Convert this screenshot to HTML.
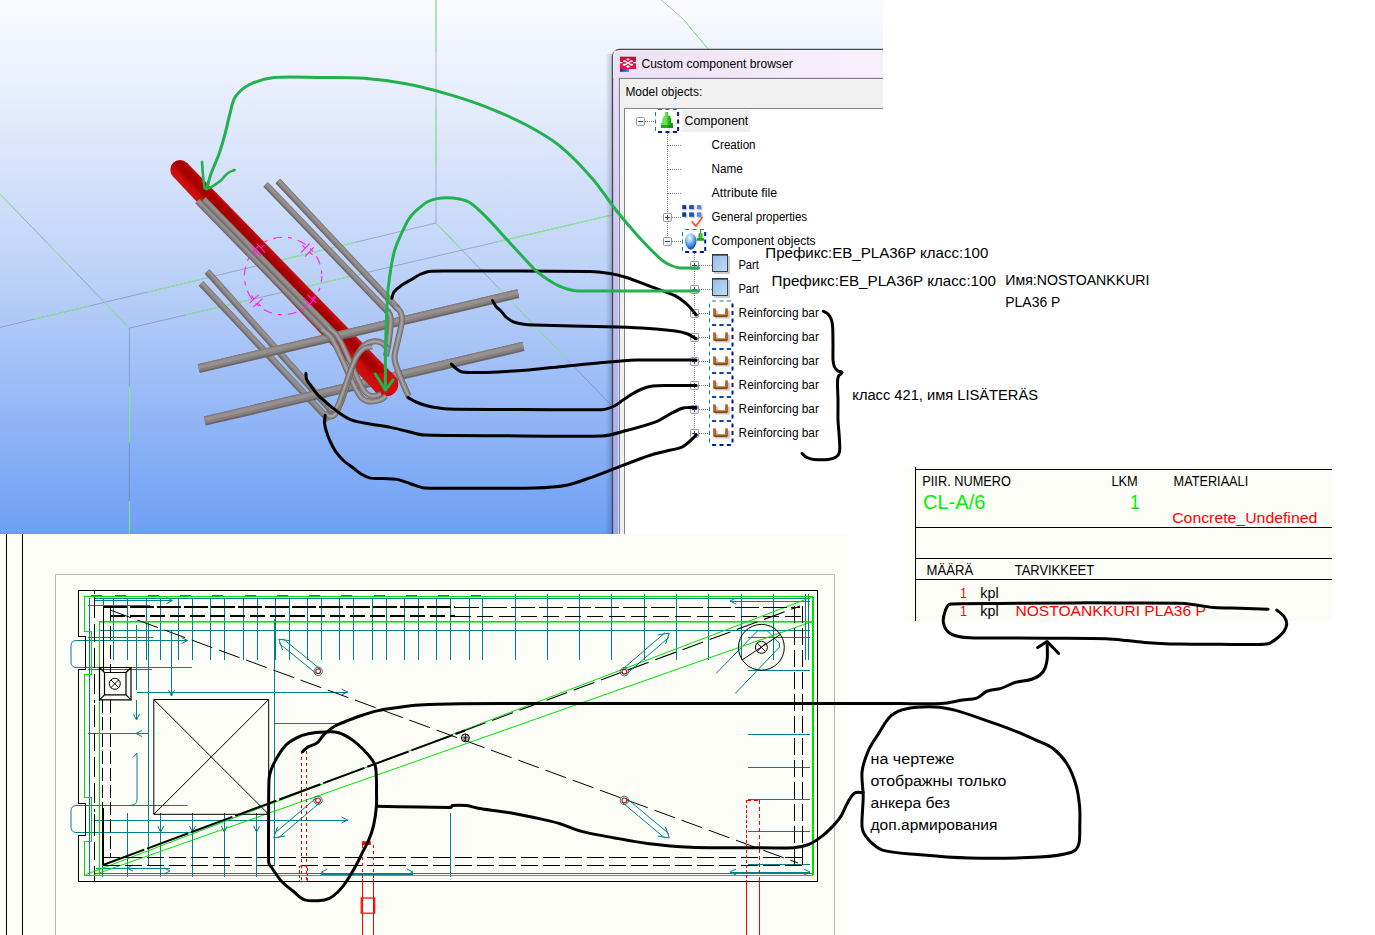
<!DOCTYPE html>
<html lang="ru"><head><meta charset="utf-8"><title>Custom component browser</title>
<style>html,body{margin:0;padding:0;background:#fff}body{width:1375px;height:935px;overflow:hidden;position:relative}svg{position:absolute;left:0;top:0;display:block}</style></head><body>
<svg width="1375" height="935" viewBox="0 0 1375 935">
<rect width="1375" height="935" fill="#ffffff"/>
<defs>
<linearGradient id="sky" x1="0" y1="0" x2="0" y2="1"><stop offset="0" stop-color="#fafbff"/><stop offset="0.25" stop-color="#dfe8fb"/><stop offset="0.5" stop-color="#bfd3f8"/><stop offset="0.75" stop-color="#97b9f6"/><stop offset="0.995" stop-color="#6fa0f5"/><stop offset="1" stop-color="#6498f0"/></linearGradient>
<linearGradient id="redg" gradientUnits="userSpaceOnUse" x1="275.2" y1="283.8" x2="290.400" y2="269.200"><stop offset="0" stop-color="#c81414"/><stop offset="0.3" stop-color="#cc0a0a"/><stop offset="0.55" stop-color="#a20000"/><stop offset="0.8" stop-color="#ac0000"/><stop offset="1" stop-color="#c41414"/></linearGradient>
<clipPath id="clip3d"><rect x="0" y="0" width="883" height="534"/></clipPath>
</defs>
<g clip-path="url(#clip3d)">
<rect x="0" y="0" width="883" height="534" fill="url(#sky)"/>
<line x1="436" y1="0" x2="436" y2="223" stroke="#5a6a94" stroke-opacity="0.42" stroke-width="1"/>
<line x1="436" y1="0" x2="436" y2="52" stroke="#80f080" stroke-width="1"/>
<line x1="436" y1="109" x2="436" y2="166" stroke="#80f080" stroke-width="1"/>
<line x1="0" y1="327.4" x2="436" y2="223" stroke="#5a6a94" stroke-opacity="0.42" stroke-width="1"/>
<line x1="33.8" y1="319.3" x2="91" y2="305.6" stroke="#80f080" stroke-width="1"/>
<line x1="146.9" y1="292.2" x2="205.2" y2="278.3" stroke="#80f080" stroke-width="1"/>
<line x1="279.9" y1="260.4" x2="355.6" y2="242.3" stroke="#80f080" stroke-width="1"/>
<line x1="436" y1="223" x2="612" y2="406" stroke="#5a6a94" stroke-opacity="0.42" stroke-width="1"/>
<line x1="436" y1="223" x2="462" y2="250" stroke="#80f080" stroke-width="1"/>
<line x1="498" y1="287.5" x2="568" y2="360.2" stroke="#80f080" stroke-width="1"/>
<line x1="129.4" y1="328.1" x2="612.4" y2="214.9" stroke="#5a6a94" stroke-opacity="0.42" stroke-width="1"/>
<line x1="186.6" y1="314.7" x2="251.9" y2="299.4" stroke="#80f080" stroke-width="1"/>
<line x1="302" y1="287.6" x2="359.7" y2="274.1" stroke="#80f080" stroke-width="1"/>
<line x1="498.3" y1="241.6" x2="612.4" y2="214.9" stroke="#80f080" stroke-width="1"/>
<line x1="0" y1="194" x2="129.4" y2="328.1" stroke="#5a6a94" stroke-opacity="0.42" stroke-width="1"/>
<line x1="0" y1="194" x2="18.7" y2="213.4" stroke="#80f080" stroke-width="1"/>
<line x1="46.6" y1="242.3" x2="68.8" y2="265.3" stroke="#80f080" stroke-width="1"/>
<line x1="102.6" y1="300.3" x2="129.4" y2="328.1" stroke="#80f080" stroke-width="1"/>
<line x1="129.4" y1="328.1" x2="129.4" y2="534" stroke="#5a6a94" stroke-opacity="0.42" stroke-width="1"/>
<line x1="129.4" y1="386.4" x2="129.4" y2="442.4" stroke="#80f080" stroke-width="1"/>
<line x1="129.4" y1="501" x2="129.4" y2="534" stroke="#80f080" stroke-width="1"/>
<line x1="659" y1="-2" x2="683" y2="18.9" stroke="#5a6a94" stroke-opacity="0.42" stroke-width="1"/>
<line x1="683" y1="18.9" x2="708.5" y2="49.5" stroke="#5a6a94" stroke-opacity="0.42" stroke-width="1"/>
<line x1="683" y1="18.9" x2="708.5" y2="49.5" stroke="#80f080" stroke-width="1"/>
<line x1="207.1" y1="271.5" x2="336" y2="416" stroke="#6c6767" stroke-width="6.4" stroke-linecap="butt"/><line x1="207.6" y1="271.1" x2="336.5" y2="415.6" stroke="#857f7f" stroke-width="5.1" stroke-linecap="butt"/><line x1="207.9" y1="270.8" x2="336.8" y2="415.3" stroke="#979090" stroke-width="2.6" stroke-linecap="butt"/>
<line x1="201" y1="283.5" x2="329" y2="420" stroke="#6c6767" stroke-width="6.4" stroke-linecap="butt"/><line x1="201.5" y1="283.1" x2="329.5" y2="419.6" stroke="#857f7f" stroke-width="5.1" stroke-linecap="butt"/><line x1="201.7" y1="282.8" x2="329.7" y2="419.3" stroke="#979090" stroke-width="2.6" stroke-linecap="butt"/>
<line x1="204.8" y1="421" x2="523.4" y2="346.4" stroke="#6c6767" stroke-width="9.5" stroke-linecap="butt"/><line x1="204.6" y1="420.1" x2="523.2" y2="345.5" stroke="#857f7f" stroke-width="7.6" stroke-linecap="butt"/><line x1="204.5" y1="419.5" x2="523.1" y2="344.9" stroke="#979090" stroke-width="3.8" stroke-linecap="butt"/>
<circle cx="180.1" cy="169.7" r="9.8" fill="url(#redg)"/>
<path d="M173 176.5L187.2 162.9L394.5 375.7L376.5 392.9Z" fill="url(#redg)"/>
<ellipse cx="385.5" cy="384.3" rx="12.8" ry="12.2" fill="#d40c0c"/>
<line x1="198.7" y1="368.6" x2="518.3" y2="293.6" stroke="#6c6767" stroke-width="9" stroke-linecap="butt"/><line x1="198.5" y1="367.7" x2="518.1" y2="292.7" stroke="#857f7f" stroke-width="7.2" stroke-linecap="butt"/><line x1="198.4" y1="367.2" x2="518" y2="292.2" stroke="#979090" stroke-width="3.6" stroke-linecap="butt"/>
<line x1="277.8" y1="181" x2="398" y2="309" stroke="#6c6767" stroke-width="6.4" stroke-linecap="butt"/><line x1="278.3" y1="180.6" x2="398.5" y2="308.6" stroke="#857f7f" stroke-width="5.1" stroke-linecap="butt"/><line x1="278.5" y1="180.3" x2="398.7" y2="308.3" stroke="#979090" stroke-width="2.6" stroke-linecap="butt"/>
<line x1="265.6" y1="184.5" x2="389" y2="313" stroke="#6c6767" stroke-width="6.4" stroke-linecap="butt"/><line x1="266.1" y1="184.1" x2="389.5" y2="312.6" stroke="#857f7f" stroke-width="5.1" stroke-linecap="butt"/><line x1="266.3" y1="183.8" x2="389.7" y2="312.3" stroke="#979090" stroke-width="2.6" stroke-linecap="butt"/>
<path d="M395 306C396.8 308 399.4 309.5 400.5 312C401.8 314.8 402.3 318 402 321C401.6 325.5 399.3 333.7 398 340C396.8 345.7 394.7 351.4 394.5 357C394.4 360.8 395.9 364.4 397 368C398.4 372.4 400.2 376.7 402 381C404.1 386 406.3 391 408.5 396" fill="none" stroke="#6c6767" stroke-width="6" stroke-linecap="butt" stroke-linejoin="round"/><path d="M395 306C396.8 308 399.4 309.5 400.5 312C401.8 314.8 402.3 318 402 321C401.6 325.5 399.3 333.7 398 340C396.8 345.7 394.7 351.4 394.5 357C394.4 360.8 395.9 364.4 397 368C398.4 372.4 400.2 376.7 402 381C404.1 386 406.3 391 408.5 396" fill="none" stroke="#8b8585" stroke-width="4.3" stroke-linecap="butt" stroke-linejoin="round"/><path d="M395 306C396.8 308 399.4 309.5 400.5 312C401.8 314.8 402.3 318 402 321C401.6 325.5 399.3 333.7 398 340C396.8 345.7 394.7 351.4 394.5 357C394.4 360.8 395.9 364.4 397 368C398.4 372.4 400.2 376.7 402 381C404.1 386 406.3 391 408.5 396" fill="none" stroke="#aaa3a3" stroke-width="1.8" stroke-linecap="butt" stroke-linejoin="round"/>
<path d="M386 310C387.3 311.7 389.3 313 390 315C390.9 317.5 390.8 320.3 390.7 323C390.5 327 389.8 334.4 389 340C388.2 345.4 387 350.7 386 356" fill="none" stroke="#6c6767" stroke-width="6" stroke-linecap="butt" stroke-linejoin="round"/><path d="M386 310C387.3 311.7 389.3 313 390 315C390.9 317.5 390.8 320.3 390.7 323C390.5 327 389.8 334.4 389 340C388.2 345.4 387 350.7 386 356" fill="none" stroke="#8b8585" stroke-width="4.3" stroke-linecap="butt" stroke-linejoin="round"/><path d="M386 310C387.3 311.7 389.3 313 390 315C390.9 317.5 390.8 320.3 390.7 323C390.5 327 389.8 334.4 389 340C388.2 345.4 387 350.7 386 356" fill="none" stroke="#aaa3a3" stroke-width="1.8" stroke-linecap="butt" stroke-linejoin="round"/>
<line x1="197.5" y1="201.1" x2="328" y2="335" stroke="#6c6767" stroke-width="6.2" stroke-linecap="butt"/><line x1="197.9" y1="200.7" x2="328.4" y2="334.6" stroke="#857f7f" stroke-width="5" stroke-linecap="butt"/><line x1="198.2" y1="200.4" x2="328.7" y2="334.3" stroke="#979090" stroke-width="2.5" stroke-linecap="butt"/>
<line x1="203.6" y1="199.3" x2="334" y2="333" stroke="#6c6767" stroke-width="6.2" stroke-linecap="butt"/><line x1="204" y1="198.9" x2="334.4" y2="332.6" stroke="#857f7f" stroke-width="5" stroke-linecap="butt"/><line x1="204.3" y1="198.6" x2="334.7" y2="332.3" stroke="#979090" stroke-width="2.5" stroke-linecap="butt"/>
<path d="M322 329C324.7 331.3 327.7 333.3 330 336C332.5 339 334.2 342.6 336 346C338.5 350.9 340.7 356 343 361C345.7 367 348.2 373.1 351 379C353.1 383.4 355.3 388.2 357.6 392C359.1 394.5 360.7 397.2 363 399C365 400.5 367.5 401.4 370 401.5C373.4 401.7 376.8 401.1 380 400C382.3 399.2 384 397.3 386 396" fill="none" stroke="#6c6767" stroke-width="6" stroke-linecap="butt" stroke-linejoin="round"/><path d="M322 329C324.7 331.3 327.7 333.3 330 336C332.5 339 334.2 342.6 336 346C338.5 350.9 340.7 356 343 361C345.7 367 348.2 373.1 351 379C353.1 383.4 355.3 388.2 357.6 392C359.1 394.5 360.7 397.2 363 399C365 400.5 367.5 401.4 370 401.5C373.4 401.7 376.8 401.1 380 400C382.3 399.2 384 397.3 386 396" fill="none" stroke="#8b8585" stroke-width="4.3" stroke-linecap="butt" stroke-linejoin="round"/><path d="M322 329C324.7 331.3 327.7 333.3 330 336C332.5 339 334.2 342.6 336 346C338.5 350.9 340.7 356 343 361C345.7 367 348.2 373.1 351 379C353.1 383.4 355.3 388.2 357.6 392C359.1 394.5 360.7 397.2 363 399C365 400.5 367.5 401.4 370 401.5C373.4 401.7 376.8 401.1 380 400C382.3 399.2 384 397.3 386 396" fill="none" stroke="#aaa3a3" stroke-width="1.8" stroke-linecap="butt" stroke-linejoin="round"/>
<path d="M328 327C330.7 329.3 333.7 331.3 336 334C338.5 337 340.2 340.6 342 344C344.5 348.9 346.7 354 349 359C351.7 365 354.2 371.1 357 377C358.9 381.1 361 385.9 363 389C364.3 391.1 365.9 393.2 368 394.5C369.7 395.6 371.9 396.1 374 396C376.4 395.9 378.7 394.7 381 394" fill="none" stroke="#6c6767" stroke-width="5.5" stroke-linecap="butt" stroke-linejoin="round"/><path d="M328 327C330.7 329.3 333.7 331.3 336 334C338.5 337 340.2 340.6 342 344C344.5 348.9 346.7 354 349 359C351.7 365 354.2 371.1 357 377C358.9 381.1 361 385.9 363 389C364.3 391.1 365.9 393.2 368 394.5C369.7 395.6 371.9 396.1 374 396C376.4 395.9 378.7 394.7 381 394" fill="none" stroke="#8b8585" stroke-width="4" stroke-linecap="butt" stroke-linejoin="round"/><path d="M328 327C330.7 329.3 333.7 331.3 336 334C338.5 337 340.2 340.6 342 344C344.5 348.9 346.7 354 349 359C351.7 365 354.2 371.1 357 377C358.9 381.1 361 385.9 363 389C364.3 391.1 365.9 393.2 368 394.5C369.7 395.6 371.9 396.1 374 396C376.4 395.9 378.7 394.7 381 394" fill="none" stroke="#aaa3a3" stroke-width="1.6" stroke-linecap="butt" stroke-linejoin="round"/>
<path d="M325 413C326.8 414.2 328.3 416.5 330.5 416.5C332.7 416.5 334.7 414.8 336 413C337.9 410.4 339.5 405.7 341 402C343.2 396.4 345.2 390.7 347 385C348.8 379.4 350.1 373.6 352 368C353.5 363.6 354.8 359.1 357 355C358.9 351.5 361 348 364 345.5C366.5 343.4 369.7 342 373 341.5C376 341.1 379.3 341.6 382 343C384.5 344.3 386 347 388 349" fill="none" stroke="#6c6767" stroke-width="6" stroke-linecap="butt" stroke-linejoin="round"/><path d="M325 413C326.8 414.2 328.3 416.5 330.5 416.5C332.7 416.5 334.7 414.8 336 413C337.9 410.4 339.5 405.7 341 402C343.2 396.4 345.2 390.7 347 385C348.8 379.4 350.1 373.6 352 368C353.5 363.6 354.8 359.1 357 355C358.9 351.5 361 348 364 345.5C366.5 343.4 369.7 342 373 341.5C376 341.1 379.3 341.6 382 343C384.5 344.3 386 347 388 349" fill="none" stroke="#8b8585" stroke-width="4.3" stroke-linecap="butt" stroke-linejoin="round"/><path d="M325 413C326.8 414.2 328.3 416.5 330.5 416.5C332.7 416.5 334.7 414.8 336 413C337.9 410.4 339.5 405.7 341 402C343.2 396.4 345.2 390.7 347 385C348.8 379.4 350.1 373.6 352 368C353.5 363.6 354.8 359.1 357 355C358.9 351.5 361 348 364 345.5C366.5 343.4 369.7 342 373 341.5C376 341.1 379.3 341.6 382 343C384.5 344.3 386 347 388 349" fill="none" stroke="#aaa3a3" stroke-width="1.8" stroke-linecap="butt" stroke-linejoin="round"/>
<path d="M331 409C332.3 409.2 333.9 410.3 335 409.5C336.6 408.3 338 405.3 339 403C340.5 399.5 343 391.7 345 386C347 380.3 348.8 374.6 351 369C352.8 364.6 354.4 360 357 356C358.8 353.1 361.1 350.3 364 348.5C366.3 347 369.3 347.2 372 346.5" fill="none" stroke="#6c6767" stroke-width="5.5" stroke-linecap="butt" stroke-linejoin="round"/><path d="M331 409C332.3 409.2 333.9 410.3 335 409.5C336.6 408.3 338 405.3 339 403C340.5 399.5 343 391.7 345 386C347 380.3 348.8 374.6 351 369C352.8 364.6 354.4 360 357 356C358.8 353.1 361.1 350.3 364 348.5C366.3 347 369.3 347.2 372 346.5" fill="none" stroke="#8b8585" stroke-width="4" stroke-linecap="butt" stroke-linejoin="round"/><path d="M331 409C332.3 409.2 333.9 410.3 335 409.5C336.6 408.3 338 405.3 339 403C340.5 399.5 343 391.7 345 386C347 380.3 348.8 374.6 351 369C352.8 364.6 354.4 360 357 356C358.8 353.1 361.1 350.3 364 348.5C366.3 347 369.3 347.2 372 346.5" fill="none" stroke="#aaa3a3" stroke-width="1.6" stroke-linecap="butt" stroke-linejoin="round"/>
<circle cx="283.1" cy="276" r="38.700" fill="none" stroke="#ff22ea" stroke-width="1.1" stroke-dasharray="9 6 4 6" stroke-dashoffset="3"/>
<line x1="301" y1="252.7" x2="309.6" y2="243.5" stroke="#ff22ea" stroke-width="1.1"/>
<line x1="305.3" y1="248.1" x2="302.2" y2="245.2" stroke="#ff22ea" stroke-width="1.1"/>
<line x1="305.1" y1="256.5" x2="313.7" y2="247.3" stroke="#ff22ea" stroke-width="1.1"/>
<line x1="309.4" y1="251.9" x2="312.5" y2="254.8" stroke="#ff22ea" stroke-width="1.1"/>
<line x1="261.3" y1="256.5" x2="252.7" y2="247.2" stroke="#ff22ea" stroke-width="1.1"/>
<line x1="257" y1="251.9" x2="253.9" y2="254.8" stroke="#ff22ea" stroke-width="1.1"/>
<line x1="265.3" y1="252.8" x2="256.7" y2="243.5" stroke="#ff22ea" stroke-width="1.1"/>
<line x1="261" y1="248.1" x2="264.1" y2="245.2" stroke="#ff22ea" stroke-width="1.1"/>
<line x1="262.5" y1="298.7" x2="253.2" y2="307.2" stroke="#ff22ea" stroke-width="1.1"/>
<line x1="257.9" y1="302.9" x2="260.7" y2="306.1" stroke="#ff22ea" stroke-width="1.1"/>
<line x1="258.8" y1="294.6" x2="249.5" y2="303.1" stroke="#ff22ea" stroke-width="1.1"/>
<line x1="254.1" y1="298.9" x2="251.3" y2="295.7" stroke="#ff22ea" stroke-width="1.1"/>
<line x1="307.2" y1="294.6" x2="316.5" y2="303.2" stroke="#ff22ea" stroke-width="1.1"/>
<line x1="311.9" y1="298.9" x2="314.8" y2="295.8" stroke="#ff22ea" stroke-width="1.1"/>
<line x1="303.5" y1="298.6" x2="312.8" y2="307.2" stroke="#ff22ea" stroke-width="1.1"/>
<line x1="308.1" y1="302.9" x2="305.2" y2="306" stroke="#ff22ea" stroke-width="1.1"/>
</g>
<defs>
<linearGradient id="ebg" x1="0" y1="0" x2="1" y2="1"><stop offset="0" stop-color="#ffffff"/><stop offset="0.5" stop-color="#fafafa"/><stop offset="1" stop-color="#dcdcdc"/></linearGradient>
<linearGradient id="partg" x1="0" y1="0" x2="1" y2="1"><stop offset="0" stop-color="#8fbdea"/><stop offset="1" stop-color="#c3ddf6"/></linearGradient>
<linearGradient id="frameg" x1="0" y1="0" x2="0" y2="1"><stop offset="0" stop-color="#efe5f6"/><stop offset="0.4" stop-color="#c9c5f2"/><stop offset="1" stop-color="#99a7ea"/></linearGradient>
<linearGradient id="titleg" x1="0" y1="0" x2="1" y2="0"><stop offset="0" stop-color="#ece0f4"/><stop offset="0.5" stop-color="#f3eaf8"/><stop offset="1" stop-color="#f8f1fb"/></linearGradient>
<linearGradient id="coneg" x1="0" y1="0" x2="1" y2="0"><stop offset="0" stop-color="#5cd048"/><stop offset="0.4" stop-color="#6fe650"/><stop offset="0.7" stop-color="#1fae1c"/><stop offset="1" stop-color="#0e8e12"/></linearGradient>
<radialGradient id="gemg" cx="0.4" cy="0.28" r="0.75"><stop offset="0" stop-color="#f0f8ff"/><stop offset="0.35" stop-color="#9cc8f6"/><stop offset="0.7" stop-color="#3a7cd8"/><stop offset="1" stop-color="#0a3c9c"/></radialGradient>
<linearGradient id="shadg" x1="0" y1="0" x2="1" y2="0"><stop offset="0" stop-color="#000830" stop-opacity="0"/><stop offset="1" stop-color="#000830" stop-opacity="0.22"/></linearGradient>
<linearGradient id="ticong" x1="0" y1="0" x2="0" y2="1"><stop offset="0" stop-color="#b01238"/><stop offset="0.35" stop-color="#e01244"/><stop offset="1" stop-color="#e81648"/></linearGradient><linearGradient id="tblueg" x1="0" y1="0" x2="1" y2="0"><stop offset="0" stop-color="#10309c"/><stop offset="1" stop-color="#4a8ae4"/></linearGradient>
<clipPath id="clipdlg"><rect x="600" y="40" width="283" height="494"/></clipPath>
</defs>
<g clip-path="url(#clipdlg)">
<rect x="605.5" y="54" width="7" height="490" fill="url(#shadg)"/>
<path d="M612.5 540V56.5a7 7 0 0 1 7-7H900V540Z" fill="url(#frameg)" stroke="#48484c" stroke-width="1.3"/>
<rect x="613.5" y="50.5" width="280" height="28" fill="url(#titleg)"/>
<path d="M613.5 78V57a6.5 6.5 0 0 1 6.5-6.5H900" fill="none" stroke="#ffffff" stroke-opacity="0.7" stroke-width="1"/>
<rect x="619.5" y="78.5" width="290" height="470" fill="#f0f0f0" stroke="#7f7f86" stroke-width="1"/>
<rect x="618.5" y="77.5" width="292" height="472" fill="none" stroke="#dcd6ee" stroke-width="1"/>
<rect x="624.5" y="108.5" width="290" height="440" fill="#ffffff" stroke="#82878f" stroke-width="1"/>
<g>
<rect x="620" y="56.700" width="16" height="12.300" fill="url(#ticong)"/>
<rect x="620" y="69" width="9" height="2.800" fill="url(#tblueg)"/>
<path d="M620 62.700h2.600M633.200 62.700h2.800" stroke="#fff" stroke-width="1.200"/>
<path d="M624.700 61.300Q626.500 61.500 628 62.900T631.500 64.700M631.200 61.300Q629.500 61.500 628 62.900T624.300 64.700" fill="none" stroke="#fff" stroke-width="1.300" stroke-linecap="round"/>
<ellipse cx="628" cy="59.4" rx="1.7" ry="0.8" fill="#fff"/>
<ellipse cx="624.6" cy="61.2" rx="1.5" ry="0.9" fill="#fff"/>
<ellipse cx="631.3" cy="61.2" rx="1.5" ry="0.9" fill="#fff"/>
<ellipse cx="624.2" cy="64.8" rx="1.6" ry="1" fill="#fff"/>
<ellipse cx="631.6" cy="64.8" rx="1.6" ry="1" fill="#fff"/>
<ellipse cx="628" cy="66.6" rx="1.7" ry="1.1" fill="#fff"/>
</g>
<text x="641.4" y="67.6" font-size="12" fill="#000" font-family="Liberation Sans, sans-serif" textLength="151.3" lengthAdjust="spacingAndGlyphs">Custom component browser</text>
<text x="625.4" y="95.7" font-size="12" fill="#000" font-family="Liberation Sans, sans-serif" textLength="76.8" lengthAdjust="spacingAndGlyphs">Model objects:</text>
<line x1="645" y1="121.5" x2="655" y2="121.5" stroke="#7c7c7c" stroke-width="1" stroke-dasharray="1 1"/>
<line x1="667.5" y1="133" x2="667.5" y2="241" stroke="#7c7c7c" stroke-width="1" stroke-dasharray="1 1"/>
<line x1="668" y1="145.5" x2="682" y2="145.5" stroke="#7c7c7c" stroke-width="1" stroke-dasharray="1 1"/>
<line x1="668" y1="169.5" x2="682" y2="169.5" stroke="#7c7c7c" stroke-width="1" stroke-dasharray="1 1"/>
<line x1="668" y1="193.5" x2="682" y2="193.5" stroke="#7c7c7c" stroke-width="1" stroke-dasharray="1 1"/>
<line x1="672" y1="217.5" x2="682" y2="217.5" stroke="#7c7c7c" stroke-width="1" stroke-dasharray="1 1"/>
<line x1="672" y1="241.5" x2="682" y2="241.5" stroke="#7c7c7c" stroke-width="1" stroke-dasharray="1 1"/>
<line x1="694.5" y1="253" x2="694.5" y2="433" stroke="#7c7c7c" stroke-width="1" stroke-dasharray="1 1"/>
<line x1="699" y1="265.5" x2="712" y2="265.5" stroke="#7c7c7c" stroke-width="1" stroke-dasharray="1 1"/>
<line x1="699" y1="289.5" x2="712" y2="289.5" stroke="#7c7c7c" stroke-width="1" stroke-dasharray="1 1"/>
<line x1="699" y1="313.5" x2="709" y2="313.5" stroke="#7c7c7c" stroke-width="1" stroke-dasharray="1 1"/>
<line x1="699" y1="337.5" x2="709" y2="337.5" stroke="#7c7c7c" stroke-width="1" stroke-dasharray="1 1"/>
<line x1="699" y1="361.5" x2="709" y2="361.5" stroke="#7c7c7c" stroke-width="1" stroke-dasharray="1 1"/>
<line x1="699" y1="385.5" x2="709" y2="385.5" stroke="#7c7c7c" stroke-width="1" stroke-dasharray="1 1"/>
<line x1="699" y1="409.5" x2="709" y2="409.5" stroke="#7c7c7c" stroke-width="1" stroke-dasharray="1 1"/>
<line x1="699" y1="433.5" x2="709" y2="433.5" stroke="#7c7c7c" stroke-width="1" stroke-dasharray="1 1"/>
<rect x="636.5" y="117.5" width="8" height="8" rx="1.2" fill="url(#ebg)" stroke="#989898" stroke-width="1"/><line x1="638" y1="121.5" x2="643" y2="121.5" stroke="#2c479a" stroke-width="1"/>
<rect x="663.5" y="213.5" width="8" height="8" rx="1.2" fill="url(#ebg)" stroke="#989898" stroke-width="1"/><line x1="665" y1="217.5" x2="670" y2="217.5" stroke="#2c479a" stroke-width="1"/><line x1="667.5" y1="215" x2="667.5" y2="220" stroke="#2c479a" stroke-width="1"/>
<rect x="663.5" y="237.5" width="8" height="8" rx="1.2" fill="url(#ebg)" stroke="#989898" stroke-width="1"/><line x1="665" y1="241.5" x2="670" y2="241.5" stroke="#2c479a" stroke-width="1"/>
<rect x="690.5" y="261.5" width="8" height="8" rx="1.2" fill="url(#ebg)" stroke="#989898" stroke-width="1"/><line x1="692" y1="265.5" x2="697" y2="265.5" stroke="#2c479a" stroke-width="1"/><line x1="694.5" y1="263" x2="694.5" y2="268" stroke="#2c479a" stroke-width="1"/>
<rect x="690.5" y="285.5" width="8" height="8" rx="1.2" fill="url(#ebg)" stroke="#989898" stroke-width="1"/><line x1="692" y1="289.5" x2="697" y2="289.5" stroke="#2c479a" stroke-width="1"/><line x1="694.5" y1="287" x2="694.5" y2="292" stroke="#2c479a" stroke-width="1"/>
<rect x="690.5" y="309.5" width="8" height="8" rx="1.2" fill="url(#ebg)" stroke="#989898" stroke-width="1"/><line x1="692" y1="313.5" x2="697" y2="313.5" stroke="#2c479a" stroke-width="1"/><line x1="694.5" y1="311" x2="694.5" y2="316" stroke="#2c479a" stroke-width="1"/>
<rect x="690.5" y="333.5" width="8" height="8" rx="1.2" fill="url(#ebg)" stroke="#989898" stroke-width="1"/><line x1="692" y1="337.5" x2="697" y2="337.5" stroke="#2c479a" stroke-width="1"/><line x1="694.5" y1="335" x2="694.5" y2="340" stroke="#2c479a" stroke-width="1"/>
<rect x="690.5" y="357.5" width="8" height="8" rx="1.2" fill="url(#ebg)" stroke="#989898" stroke-width="1"/><line x1="692" y1="361.5" x2="697" y2="361.5" stroke="#2c479a" stroke-width="1"/><line x1="694.5" y1="359" x2="694.5" y2="364" stroke="#2c479a" stroke-width="1"/>
<rect x="690.5" y="381.5" width="8" height="8" rx="1.2" fill="url(#ebg)" stroke="#989898" stroke-width="1"/><line x1="692" y1="385.5" x2="697" y2="385.5" stroke="#2c479a" stroke-width="1"/><line x1="694.5" y1="383" x2="694.5" y2="388" stroke="#2c479a" stroke-width="1"/>
<rect x="690.5" y="405.5" width="8" height="8" rx="1.2" fill="url(#ebg)" stroke="#989898" stroke-width="1"/><line x1="692" y1="409.5" x2="697" y2="409.5" stroke="#2c479a" stroke-width="1"/><line x1="694.5" y1="407" x2="694.5" y2="412" stroke="#2c479a" stroke-width="1"/>
<rect x="690.5" y="429.5" width="8" height="8" rx="1.2" fill="url(#ebg)" stroke="#989898" stroke-width="1"/><line x1="692" y1="433.5" x2="697" y2="433.5" stroke="#2c479a" stroke-width="1"/><line x1="694.5" y1="431" x2="694.5" y2="436" stroke="#2c479a" stroke-width="1"/>
<rect x="682" y="110" width="68" height="22" fill="#efefef"/>
<path d="M655.5 109.5H678.1M655.5 109.5V132.1" fill="none" stroke="#0a78d7" stroke-width="1" stroke-dasharray="4 3.400" stroke-dashoffset="-2.600"/><path d="M678.1 109.5V132.1M655.5 132.1H678.1" fill="none" stroke="#00189a" stroke-width="2" stroke-dasharray="4 3.400" stroke-dashoffset="-2.600"/>
<path d="M665 112h3.200v3.800h2.300v2.400h0.700v4.800h1.700v5h-12v-5h1.500v-4.800h1v-2.400h1.600z" fill="url(#coneg)"/>
<rect x="660.900" y="125" width="12" height="3" fill="#0f8f12" opacity="0.75"/>
<text x="684.6" y="124.7" font-size="12" fill="#000" font-family="Liberation Sans, sans-serif" textLength="63.7" lengthAdjust="spacingAndGlyphs">Component</text>
<text x="711.6" y="148.5" font-size="12" fill="#000" font-family="Liberation Sans, sans-serif" textLength="44" lengthAdjust="spacingAndGlyphs">Creation</text>
<text x="711.6" y="172.5" font-size="12" fill="#000" font-family="Liberation Sans, sans-serif" textLength="31.3" lengthAdjust="spacingAndGlyphs">Name</text>
<text x="711.6" y="196.5" font-size="12" fill="#000" font-family="Liberation Sans, sans-serif" textLength="65.5" lengthAdjust="spacingAndGlyphs">Attribute file</text>
<text x="711.6" y="220.5" font-size="12" fill="#000" font-family="Liberation Sans, sans-serif" textLength="95.5" lengthAdjust="spacingAndGlyphs">General properties</text>
<text x="711.6" y="244.5" font-size="12" fill="#000" font-family="Liberation Sans, sans-serif" textLength="104" lengthAdjust="spacingAndGlyphs">Component objects</text>
<rect x="683.4" y="206.3" width="3.9" height="4" fill="#c9c9c9"/><rect x="682.2" y="205.1" width="3.9" height="4" fill="#0c3aa0"/><rect x="690.3" y="206.3" width="4.8" height="4" fill="#c9c9c9"/><rect x="689.1" y="205.1" width="4.8" height="4" fill="#2452b4"/><rect x="698" y="206.3" width="4.5" height="4" fill="#c9c9c9"/><rect x="696.8" y="205.1" width="4.5" height="4" fill="#6686cc"/><rect x="683.4" y="213.5" width="3.9" height="4.5" fill="#c9c9c9"/><rect x="682.2" y="212.3" width="3.9" height="4.5" fill="#0c3aa0"/><rect x="690.3" y="213.5" width="4.8" height="4.5" fill="#c9c9c9"/><rect x="689.1" y="212.3" width="4.8" height="4.5" fill="#2452b4"/><rect x="698" y="213.5" width="4.5" height="4.5" fill="#c9c9c9"/><rect x="696.8" y="212.3" width="4.5" height="4.5" fill="#6686cc"/><path d="M692.100 221.900L696 226.100L702.200 217.400" fill="none" stroke="#ff4e20" stroke-width="1.700" stroke-linecap="round" stroke-linejoin="round"/>
<path d="M682.5 229.5H705.2M682.5 229.5V252" fill="none" stroke="#0a78d7" stroke-width="1" stroke-dasharray="4 3.400" stroke-dashoffset="-2.600"/><path d="M705.2 229.5V252M682.5 252H705.2" fill="none" stroke="#00189a" stroke-width="2" stroke-dasharray="4 3.400" stroke-dashoffset="-2.600"/>
<path d="M690.500 233.200C693.500 233.200 696.600 237 696.600 240.500C696.600 244.500 693.500 249.800 690.800 249.800C688 249.800 684.900 244.500 684.900 240.500C684.900 237 687.500 233.200 690.500 233.200Z" fill="url(#gemg)"/>
<path d="M700 230h1v3.200h1.500v4.800h1.500v2.700h-7v-2.700h1.500v-4.800h1.500z" fill="#1aa51a"/>
<path d="M700 233.500h1.500v4.500h-1.500z" fill="#5ed04a"/>
<rect x="714" y="256" width="16" height="18" fill="#8a8a8a" opacity="0.45"/><rect x="712.5" y="254.5" width="15" height="17" fill="url(#partg)" stroke="#3e4046" stroke-width="1"/><path d="M712 254.8h16" stroke="#34363c" stroke-width="1.6"/>
<rect x="714" y="280" width="16" height="18" fill="#8a8a8a" opacity="0.45"/><rect x="712.5" y="278.5" width="15" height="17" fill="url(#partg)" stroke="#3e4046" stroke-width="1"/><path d="M712 278.8h16" stroke="#34363c" stroke-width="1.6"/>
<text x="738.4" y="268.5" font-size="12" fill="#000" font-family="Liberation Sans, sans-serif" textLength="20.5" lengthAdjust="spacingAndGlyphs">Part</text>
<text x="738.4" y="292.5" font-size="12" fill="#000" font-family="Liberation Sans, sans-serif" textLength="20.5" lengthAdjust="spacingAndGlyphs">Part</text>
<path d="M709.5 301H732.5M709.5 301V325" fill="none" stroke="#0a78d7" stroke-width="1" stroke-dasharray="4 3.400" stroke-dashoffset="-2.600"/><path d="M732.5 301V325M709.5 325H732.5" fill="none" stroke="#00189a" stroke-width="2" stroke-dasharray="4 3.400" stroke-dashoffset="-2.600"/><path d="M716.5 310.4v6.800h12v-6.800" fill="none" stroke="#c4c4c4" stroke-width="2.600"/><path d="M714.5 308.4v7.400h12v-7.400" fill="none" stroke="#8e4410" stroke-width="2.500" stroke-linejoin="round"/><path d="M714.2 308.4v6.600h12v-6.600" fill="none" stroke="#c87a2a" stroke-width="0.900"/>
<text x="738.6" y="317.3" font-size="12" fill="#000" font-family="Liberation Sans, sans-serif" textLength="80.3" lengthAdjust="spacingAndGlyphs">Reinforcing bar</text>
<path d="M709.5 325H732.5M709.5 325V349" fill="none" stroke="#0a78d7" stroke-width="1" stroke-dasharray="4 3.400" stroke-dashoffset="-2.600"/><path d="M732.5 325V349M709.5 349H732.5" fill="none" stroke="#00189a" stroke-width="2" stroke-dasharray="4 3.400" stroke-dashoffset="-2.600"/><path d="M716.5 334.4v6.800h12v-6.800" fill="none" stroke="#c4c4c4" stroke-width="2.600"/><path d="M714.5 332.4v7.400h12v-7.400" fill="none" stroke="#8e4410" stroke-width="2.500" stroke-linejoin="round"/><path d="M714.2 332.4v6.600h12v-6.600" fill="none" stroke="#c87a2a" stroke-width="0.900"/>
<text x="738.6" y="341.3" font-size="12" fill="#000" font-family="Liberation Sans, sans-serif" textLength="80.3" lengthAdjust="spacingAndGlyphs">Reinforcing bar</text>
<path d="M709.5 349H732.5M709.5 349V373" fill="none" stroke="#0a78d7" stroke-width="1" stroke-dasharray="4 3.400" stroke-dashoffset="-2.600"/><path d="M732.5 349V373M709.5 373H732.5" fill="none" stroke="#00189a" stroke-width="2" stroke-dasharray="4 3.400" stroke-dashoffset="-2.600"/><path d="M716.5 358.4v6.800h12v-6.800" fill="none" stroke="#c4c4c4" stroke-width="2.600"/><path d="M714.5 356.4v7.400h12v-7.400" fill="none" stroke="#8e4410" stroke-width="2.500" stroke-linejoin="round"/><path d="M714.2 356.4v6.600h12v-6.600" fill="none" stroke="#c87a2a" stroke-width="0.900"/>
<text x="738.6" y="365.3" font-size="12" fill="#000" font-family="Liberation Sans, sans-serif" textLength="80.3" lengthAdjust="spacingAndGlyphs">Reinforcing bar</text>
<path d="M709.5 373H732.5M709.5 373V397" fill="none" stroke="#0a78d7" stroke-width="1" stroke-dasharray="4 3.400" stroke-dashoffset="-2.600"/><path d="M732.5 373V397M709.5 397H732.5" fill="none" stroke="#00189a" stroke-width="2" stroke-dasharray="4 3.400" stroke-dashoffset="-2.600"/><path d="M716.5 382.4v6.800h12v-6.800" fill="none" stroke="#c4c4c4" stroke-width="2.600"/><path d="M714.5 380.4v7.400h12v-7.400" fill="none" stroke="#8e4410" stroke-width="2.500" stroke-linejoin="round"/><path d="M714.2 380.4v6.600h12v-6.600" fill="none" stroke="#c87a2a" stroke-width="0.900"/>
<text x="738.6" y="389.3" font-size="12" fill="#000" font-family="Liberation Sans, sans-serif" textLength="80.3" lengthAdjust="spacingAndGlyphs">Reinforcing bar</text>
<path d="M709.5 397H732.5M709.5 397V421" fill="none" stroke="#0a78d7" stroke-width="1" stroke-dasharray="4 3.400" stroke-dashoffset="-2.600"/><path d="M732.5 397V421M709.5 421H732.5" fill="none" stroke="#00189a" stroke-width="2" stroke-dasharray="4 3.400" stroke-dashoffset="-2.600"/><path d="M716.5 406.4v6.800h12v-6.800" fill="none" stroke="#c4c4c4" stroke-width="2.600"/><path d="M714.5 404.4v7.400h12v-7.400" fill="none" stroke="#8e4410" stroke-width="2.500" stroke-linejoin="round"/><path d="M714.2 404.4v6.600h12v-6.600" fill="none" stroke="#c87a2a" stroke-width="0.900"/>
<text x="738.6" y="413.3" font-size="12" fill="#000" font-family="Liberation Sans, sans-serif" textLength="80.3" lengthAdjust="spacingAndGlyphs">Reinforcing bar</text>
<path d="M709.5 421H732.5M709.5 421V445" fill="none" stroke="#0a78d7" stroke-width="1" stroke-dasharray="4 3.400" stroke-dashoffset="-2.600"/><path d="M732.5 421V445M709.5 445H732.5" fill="none" stroke="#00189a" stroke-width="2" stroke-dasharray="4 3.400" stroke-dashoffset="-2.600"/><path d="M716.5 430.4v6.800h12v-6.800" fill="none" stroke="#c4c4c4" stroke-width="2.600"/><path d="M714.5 428.4v7.400h12v-7.400" fill="none" stroke="#8e4410" stroke-width="2.500" stroke-linejoin="round"/><path d="M714.2 428.4v6.600h12v-6.600" fill="none" stroke="#c87a2a" stroke-width="0.900"/>
<text x="738.6" y="437.3" font-size="12" fill="#000" font-family="Liberation Sans, sans-serif" textLength="80.3" lengthAdjust="spacingAndGlyphs">Reinforcing bar</text>
</g>
<g shape-rendering="auto">
<rect x="0" y="534" width="848" height="401" fill="#fdfdf8"/>
<line x1="6.5" y1="534" x2="6.5" y2="935" stroke="#000" stroke-width="1"  shape-rendering="crispEdges"/>
<line x1="22.5" y1="534" x2="22.5" y2="935" stroke="#000" stroke-width="1"  shape-rendering="crispEdges"/>
<path d="M55.5 936V574.500H834.500V936" fill="none" stroke="#b9b9b9" stroke-width="1"/>
<line x1="89.5" y1="598" x2="89.5" y2="607" stroke="#008088" stroke-width="1"  shape-rendering="crispEdges"/>
<line x1="103.5" y1="598" x2="103.5" y2="607" stroke="#008088" stroke-width="1"  shape-rendering="crispEdges"/>
<line x1="113.5" y1="598" x2="113.5" y2="660" stroke="#008088" stroke-width="1"  shape-rendering="crispEdges"/>
<line x1="127.5" y1="598" x2="127.5" y2="660" stroke="#008088" stroke-width="1"  shape-rendering="crispEdges"/>
<line x1="146.8" y1="598" x2="146.8" y2="660" stroke="#008088" stroke-width="1"  shape-rendering="crispEdges"/>
<line x1="160.4" y1="598" x2="160.4" y2="660" stroke="#008088" stroke-width="1"  shape-rendering="crispEdges"/>
<line x1="178.9" y1="598" x2="178.9" y2="660" stroke="#008088" stroke-width="1"  shape-rendering="crispEdges"/>
<line x1="192.7" y1="598" x2="192.7" y2="660" stroke="#008088" stroke-width="1"  shape-rendering="crispEdges"/>
<line x1="210.6" y1="598" x2="210.6" y2="660" stroke="#008088" stroke-width="1"  shape-rendering="crispEdges"/>
<line x1="224.7" y1="598" x2="224.7" y2="660" stroke="#008088" stroke-width="1"  shape-rendering="crispEdges"/>
<line x1="243.3" y1="598" x2="243.3" y2="660" stroke="#008088" stroke-width="1"  shape-rendering="crispEdges"/>
<line x1="257" y1="598" x2="257" y2="660" stroke="#008088" stroke-width="1"  shape-rendering="crispEdges"/>
<line x1="275.6" y1="598" x2="275.6" y2="660" stroke="#008088" stroke-width="1"  shape-rendering="crispEdges"/>
<line x1="289.3" y1="598" x2="289.3" y2="660" stroke="#008088" stroke-width="1"  shape-rendering="crispEdges"/>
<line x1="307.7" y1="598" x2="307.7" y2="660" stroke="#008088" stroke-width="1"  shape-rendering="crispEdges"/>
<line x1="321.5" y1="598" x2="321.5" y2="660" stroke="#008088" stroke-width="1"  shape-rendering="crispEdges"/>
<line x1="339.6" y1="598" x2="339.6" y2="660" stroke="#008088" stroke-width="1"  shape-rendering="crispEdges"/>
<line x1="353.5" y1="598" x2="353.5" y2="660" stroke="#008088" stroke-width="1"  shape-rendering="crispEdges"/>
<line x1="372.7" y1="598" x2="372.7" y2="660" stroke="#008088" stroke-width="1"  shape-rendering="crispEdges"/>
<line x1="386.5" y1="598" x2="386.5" y2="660" stroke="#008088" stroke-width="1"  shape-rendering="crispEdges"/>
<line x1="404.6" y1="598" x2="404.6" y2="660" stroke="#008088" stroke-width="1"  shape-rendering="crispEdges"/>
<line x1="418.6" y1="598" x2="418.6" y2="660" stroke="#008088" stroke-width="1"  shape-rendering="crispEdges"/>
<line x1="436.7" y1="598" x2="436.7" y2="660" stroke="#008088" stroke-width="1"  shape-rendering="crispEdges"/>
<line x1="450.6" y1="598" x2="450.6" y2="660" stroke="#008088" stroke-width="1"  shape-rendering="crispEdges"/>
<line x1="469.4" y1="598" x2="469.4" y2="660" stroke="#008088" stroke-width="1"  shape-rendering="crispEdges"/>
<line x1="482.5" y1="598" x2="482.5" y2="660" stroke="#008088" stroke-width="1"  shape-rendering="crispEdges"/>
<line x1="89.5" y1="607" x2="89.5" y2="875" stroke="#008088" stroke-width="1"  shape-rendering="crispEdges"/>
<line x1="91" y1="595.5" x2="102" y2="595.5" stroke="#008088" stroke-width="1.4"  shape-rendering="crispEdges"/>
<line x1="115" y1="595.5" x2="126" y2="595.5" stroke="#008088" stroke-width="1.4"  shape-rendering="crispEdges"/>
<line x1="148.3" y1="595.5" x2="158.9" y2="595.5" stroke="#008088" stroke-width="1.4"  shape-rendering="crispEdges"/>
<line x1="180.4" y1="595.5" x2="191.2" y2="595.5" stroke="#008088" stroke-width="1.4"  shape-rendering="crispEdges"/>
<line x1="212.1" y1="595.5" x2="223.2" y2="595.5" stroke="#008088" stroke-width="1.4"  shape-rendering="crispEdges"/>
<line x1="244.8" y1="595.5" x2="255.5" y2="595.5" stroke="#008088" stroke-width="1.4"  shape-rendering="crispEdges"/>
<line x1="277.1" y1="595.5" x2="287.8" y2="595.5" stroke="#008088" stroke-width="1.4"  shape-rendering="crispEdges"/>
<line x1="309.2" y1="595.5" x2="320" y2="595.5" stroke="#008088" stroke-width="1.4"  shape-rendering="crispEdges"/>
<line x1="341.1" y1="595.5" x2="352" y2="595.5" stroke="#008088" stroke-width="1.4"  shape-rendering="crispEdges"/>
<line x1="374.2" y1="595.5" x2="385" y2="595.5" stroke="#008088" stroke-width="1.4"  shape-rendering="crispEdges"/>
<line x1="406.1" y1="595.5" x2="417.1" y2="595.5" stroke="#008088" stroke-width="1.4"  shape-rendering="crispEdges"/>
<line x1="438.2" y1="595.5" x2="449.1" y2="595.5" stroke="#008088" stroke-width="1.4"  shape-rendering="crispEdges"/>
<line x1="470.9" y1="595.5" x2="481" y2="595.5" stroke="#008088" stroke-width="1.4"  shape-rendering="crispEdges"/>
<line x1="515.6" y1="594" x2="515.6" y2="660" stroke="#008088" stroke-width="1"  shape-rendering="crispEdges"/>
<line x1="547.7" y1="594" x2="547.7" y2="660" stroke="#008088" stroke-width="1"  shape-rendering="crispEdges"/>
<line x1="579.8" y1="594" x2="579.8" y2="660" stroke="#008088" stroke-width="1"  shape-rendering="crispEdges"/>
<line x1="611.9" y1="594" x2="611.9" y2="660" stroke="#008088" stroke-width="1"  shape-rendering="crispEdges"/>
<line x1="644.4" y1="594" x2="644.4" y2="660" stroke="#008088" stroke-width="1"  shape-rendering="crispEdges"/>
<line x1="676.3" y1="594" x2="676.3" y2="660" stroke="#008088" stroke-width="1"  shape-rendering="crispEdges"/>
<line x1="708.8" y1="594" x2="708.8" y2="660" stroke="#008088" stroke-width="1"  shape-rendering="crispEdges"/>
<line x1="741.1" y1="594" x2="741.1" y2="660" stroke="#008088" stroke-width="1"  shape-rendering="crispEdges"/>
<line x1="773.4" y1="594" x2="773.4" y2="660" stroke="#008088" stroke-width="1"  shape-rendering="crispEdges"/>
<line x1="805.5" y1="594" x2="805.5" y2="660" stroke="#008088" stroke-width="1"  shape-rendering="crispEdges"/>
<line x1="94.8" y1="600.5" x2="172.4" y2="600.5" stroke="#008088" stroke-width="1"  shape-rendering="crispEdges"/>
<path d="M166.4 597.5L172.4 600.5L166.4 603.5" fill="none" stroke="#008088" stroke-width="1"/>
<line x1="88.4" y1="605.5" x2="150" y2="605.5" stroke="#008088" stroke-width="1"  shape-rendering="crispEdges"/>
<line x1="99.5" y1="630.5" x2="810" y2="630.5" stroke="#008088" stroke-width="1"  shape-rendering="crispEdges"/>
<line x1="88.4" y1="637.5" x2="152.7" y2="637.5" stroke="#008088" stroke-width="1"  shape-rendering="crispEdges"/>
<path d="M181.6 637.5L187.6 640.5L181.6 643.5" fill="none" stroke="#008088" stroke-width="1"/>
<line x1="88" y1="669.5" x2="152" y2="669.5" stroke="#008088" stroke-width="1"  shape-rendering="crispEdges"/>
<line x1="93.5" y1="598.5" x2="810" y2="598.5" stroke="#008088" stroke-width="1"  shape-rendering="crispEdges"/>
<line x1="136.5" y1="625" x2="136.5" y2="690" stroke="#008088" stroke-width="1"  shape-rendering="crispEdges"/>
<line x1="136.5" y1="692.5" x2="280" y2="692.5" stroke="#008088" stroke-width="1"  shape-rendering="crispEdges"/>
<line x1="148" y1="621" x2="148" y2="866" stroke="#008088" stroke-width="1"  shape-rendering="crispEdges"/>
<line x1="171.5" y1="630" x2="171.5" y2="696" stroke="#008088" stroke-width="1"  shape-rendering="crispEdges"/>
<path d="M168.5 690L171.5 696L174.5 690" fill="none" stroke="#008088" stroke-width="1"/>
<line x1="274.5" y1="619" x2="274.5" y2="866" stroke="#008088" stroke-width="1"  shape-rendering="crispEdges"/>
<line x1="136.5" y1="700" x2="136.5" y2="720" stroke="#008088" stroke-width="1"  shape-rendering="crispEdges"/>
<path d="M133.5 714L136.5 720L139.5 714" fill="none" stroke="#008088" stroke-width="1"/>
<line x1="88" y1="733.5" x2="148" y2="733.5" stroke="#008088" stroke-width="1"  shape-rendering="crispEdges"/>
<path d="M142 730.5L136 733.5L142 736.5" fill="none" stroke="#008088" stroke-width="1"/>
<line x1="274.5" y1="692" x2="347.6" y2="692" stroke="#008088" stroke-width="1"  shape-rendering="crispEdges"/>
<path d="M341.6 689L347.6 692L341.6 695" fill="none" stroke="#008088" stroke-width="1"/>
<line x1="274.5" y1="723.2" x2="336.7" y2="723.2" stroke="#008088" stroke-width="1"  shape-rendering="crispEdges"/>
<path d="M187.600 640.5H76a5 5 0 0 0-5 5V662.5a5 5 0 0 0 5 5H192" fill="none" stroke="#008088" stroke-width="1"/>
<path d="M187.600 805.5H76a5 5 0 0 0-5 5V827.5a5 5 0 0 0 5 5H192" fill="none" stroke="#008088" stroke-width="1"/>
<path d="M133 757.500L137 753V799Q137 805.200 131 805.200" fill="none" stroke="#008088" stroke-width="1"/>
<line x1="102.5" y1="813" x2="102.5" y2="877" stroke="#008088" stroke-width="1"  shape-rendering="crispEdges"/>
<line x1="127.9" y1="813" x2="127.9" y2="877" stroke="#008088" stroke-width="1"  shape-rendering="crispEdges"/>
<line x1="160.7" y1="813" x2="160.7" y2="877" stroke="#008088" stroke-width="1"  shape-rendering="crispEdges"/>
<line x1="192.5" y1="813" x2="192.5" y2="877" stroke="#008088" stroke-width="1"  shape-rendering="crispEdges"/>
<line x1="224.3" y1="813" x2="224.3" y2="877" stroke="#008088" stroke-width="1"  shape-rendering="crispEdges"/>
<line x1="256.6" y1="813" x2="256.6" y2="877" stroke="#008088" stroke-width="1"  shape-rendering="crispEdges"/>
<path d="M157.7 826L160.7 832L163.7 826" fill="none" stroke="#008088" stroke-width="1"/>
<path d="M189.5 826L192.5 832L195.5 826" fill="none" stroke="#008088" stroke-width="1"/>
<path d="M221.3 826L224.3 832L227.3 826" fill="none" stroke="#008088" stroke-width="1"/>
<path d="M253.6 826L256.6 832L259.6 826" fill="none" stroke="#008088" stroke-width="1"/>
<line x1="450.4" y1="812.8" x2="450.4" y2="877.2" stroke="#008088" stroke-width="1"  shape-rendering="crispEdges"/>
<line x1="94" y1="820" x2="347.5" y2="820" stroke="#008088" stroke-width="1"  shape-rendering="crispEdges"/>
<path d="M341.5 817L347.5 820L341.5 823" fill="none" stroke="#008088" stroke-width="1"/>
<line x1="94" y1="873.7" x2="812" y2="873.7" stroke="#008088" stroke-width="1"  shape-rendering="crispEdges"/>
<line x1="321.3" y1="873.7" x2="412.9" y2="873.7" stroke="#008088" stroke-width="2"  shape-rendering="crispEdges"/>
<path d="M327.3 869L321.3 872L327.3 875" fill="none" stroke="#008088" stroke-width="1"/>
<path d="M406.9 869L412.9 872L406.9 875" fill="none" stroke="#008088" stroke-width="1"/>
<line x1="730" y1="872" x2="810" y2="872" stroke="#008088" stroke-width="1"  shape-rendering="crispEdges"/>
<path d="M736 869L730 872L736 875" fill="none" stroke="#008088" stroke-width="1"/>
<path d="M804 869L810 872L804 875" fill="none" stroke="#008088" stroke-width="1"/>
<line x1="96" y1="868" x2="170" y2="868" stroke="#008088" stroke-width="1"  shape-rendering="crispEdges"/>
<path d="M164 868L170 871L164 874" fill="none" stroke="#008088" stroke-width="1"/>
<path d="M133 865L127 868L133 871" fill="none" stroke="#008088" stroke-width="1"/>
<line x1="748" y1="637.5" x2="810" y2="637.5" stroke="#008088" stroke-width="1"  shape-rendering="crispEdges"/>
<line x1="748" y1="670.4" x2="810" y2="670.4" stroke="#008088" stroke-width="1"  shape-rendering="crispEdges"/>
<line x1="748" y1="734.2" x2="810" y2="734.2" stroke="#008088" stroke-width="1"  shape-rendering="crispEdges"/>
<line x1="748" y1="767.4" x2="810" y2="767.4" stroke="#008088" stroke-width="1"  shape-rendering="crispEdges"/>
<line x1="748" y1="799.7" x2="810" y2="799.7" stroke="#008088" stroke-width="1"  shape-rendering="crispEdges"/>
<line x1="748" y1="831.4" x2="810" y2="831.4" stroke="#008088" stroke-width="1"  shape-rendering="crispEdges"/>
<line x1="748" y1="864.1" x2="810" y2="864.1" stroke="#008088" stroke-width="1"  shape-rendering="crispEdges"/>
<line x1="730" y1="601" x2="810" y2="601" stroke="#008088" stroke-width="1"  shape-rendering="crispEdges"/>
<path d="M736 598L730 601L736 604" fill="none" stroke="#008088" stroke-width="1"/>
<line x1="808" y1="594" x2="808" y2="660" stroke="#008088" stroke-width="1"  shape-rendering="crispEdges"/>
<line x1="716" y1="673.5" x2="757.5" y2="630.9" stroke="#008088" stroke-width="1" />
<line x1="735.2" y1="693.5" x2="779.3" y2="647.3" stroke="#008088" stroke-width="1" />
<path d="M757.500 630.900h10l12 12.500v4" fill="none" stroke="#008088" stroke-width="1"/>
<path d="M78.500 590.500H817.500V881.500H78.500V835.500H85.500V803.500H78.500V669.500H85.500V636.500H78.500Z" fill="none" stroke="#000" stroke-width="1" shape-rendering="crispEdges"/>
<line x1="94.5" y1="590.5" x2="94.5" y2="881.5" stroke="#000" stroke-width="1" stroke-dasharray="3 2 22 6 18 6 20 6 20 6"  shape-rendering="crispEdges"/>
<path d="M84.500 596.500H812V875H84.500V841.500H91.500V797.500H84.500V674.500H91.500V631.500H84.500Z" fill="none" stroke="#00e000" stroke-width="1" shape-rendering="crispEdges"/>
<line x1="812.5" y1="596.5" x2="812.5" y2="875" stroke="#00e000" stroke-width="2"  shape-rendering="crispEdges"/>
<path d="M99.500 875V621.500H812" fill="none" stroke="#00e000" stroke-width="1" shape-rendering="crispEdges"/>
<line x1="99.5" y1="622.5" x2="812" y2="622.5" stroke="#00e000" stroke-width="1" stroke-opacity="0.55" shape-rendering="crispEdges"/>
<line x1="85.5" y1="874.7" x2="812" y2="597" stroke="#00e000" stroke-width="1" />
<line x1="94.3" y1="874.7" x2="812" y2="621.7" stroke="#00e000" stroke-width="1" />
<line x1="102.5" y1="607" x2="455" y2="607" stroke="#000" stroke-width="2" stroke-dasharray="24 3"  shape-rendering="crispEdges"/>
<line x1="455" y1="607.5" x2="800" y2="607.5" stroke="#000" stroke-width="1" stroke-dasharray="24 4"  shape-rendering="crispEdges"/>
<line x1="110" y1="616" x2="455" y2="616" stroke="#000" stroke-width="2" stroke-dasharray="15 5"  shape-rendering="crispEdges"/>
<line x1="455" y1="616.5" x2="802" y2="616.5" stroke="#000" stroke-width="1" stroke-dasharray="16 6"  shape-rendering="crispEdges"/>
<line x1="103.5" y1="606" x2="103.5" y2="672" stroke="#000" stroke-width="1.6"  shape-rendering="crispEdges"/>
<line x1="110.5" y1="607" x2="110.5" y2="672" stroke="#000" stroke-width="1" stroke-dasharray="14 5"  shape-rendering="crispEdges"/>
<line x1="102.5" y1="700" x2="102.5" y2="865" stroke="#000" stroke-width="1" stroke-dasharray="13 4"  shape-rendering="crispEdges"/>
<line x1="110.2" y1="700" x2="110.2" y2="858" stroke="#000" stroke-width="1" stroke-dasharray="13 4"  shape-rendering="crispEdges"/>
<line x1="103" y1="857.5" x2="802" y2="857.5" stroke="#000" stroke-width="1" stroke-dasharray="17 5"  shape-rendering="crispEdges"/>
<line x1="103" y1="865.2" x2="802" y2="865.2" stroke="#000" stroke-width="1" stroke-dasharray="17 5"  shape-rendering="crispEdges"/>
<line x1="794" y1="606" x2="794" y2="865" stroke="#000" stroke-width="1" stroke-dasharray="17 5"  shape-rendering="crispEdges"/>
<line x1="802" y1="606" x2="802" y2="865" stroke="#000" stroke-width="1" stroke-dasharray="17 5"  shape-rendering="crispEdges"/>
<line x1="103" y1="808" x2="103" y2="865" stroke="#000" stroke-width="2"  shape-rendering="crispEdges"/>
<line x1="103" y1="865" x2="465" y2="730.5" stroke="#000" stroke-width="2" stroke-dasharray="44 3" />
<line x1="465" y1="730.5" x2="800" y2="606" stroke="#000" stroke-width="1.1" stroke-dasharray="22 7" />
<line x1="110" y1="610" x2="798" y2="863" stroke="#000" stroke-width="1" stroke-dasharray="22 7" />
<path d="M153.800 699.500H268.700V814.300H153.800ZM153.800 699.500L268.700 814.300M268.700 699.500L153.800 814.300" fill="none" stroke="#000" stroke-width="1"/>
<path d="M99.500 667.500H131V699.800H99.500ZM104.500 672.500H126V694.800H104.500ZM99.500 667.500l5 5M131 667.500l-5 5M99.500 699.800l5-5M131 699.800l-5-5" fill="none" stroke="#000" stroke-width="1.2"/>
<circle cx="114.800" cy="683.800" r="5.500" fill="none" stroke="#000"/><path d="M110.900 679.900l7.800 7.800M118.700 679.900l-7.800 7.800" stroke="#000"/>
<circle cx="761.400" cy="647.300" r="22.900" fill="none" stroke="#000" stroke-width="1"/>
<circle cx="761.400" cy="647.300" r="6" fill="none" stroke="#000"/><path d="M757.200 643.100l8.400 8.400M765.600 643.100l-8.400 8.400" stroke="#000"/>
<line x1="742" y1="660" x2="781" y2="634" stroke="#000" stroke-width="1" />
<line x1="316.3" y1="673.6" x2="279.1" y2="643.3" stroke="#008088" stroke-width="1" /><line x1="320.1" y1="669" x2="282.9" y2="638.7" stroke="#008088" stroke-width="1" /><path d="M290.2 640.8L278.7 639.1L282.6 650.1" fill="none" stroke="#008088" stroke-width="1"/>
<circle cx="318.2" cy="671.3" r="4.2" fill="none" stroke="#008088" stroke-width="1"/><circle cx="318.2" cy="671.3" r="2.4" fill="none" stroke="#e01010" stroke-width="1.2"/>
<line x1="622.4" y1="669.4" x2="665" y2="632.7" stroke="#008088" stroke-width="1" /><line x1="626.4" y1="674" x2="669" y2="637.3" stroke="#008088" stroke-width="1" /><path d="M665.6 644.1L669.3 633L657.8 635" fill="none" stroke="#008088" stroke-width="1"/>
<circle cx="624.4" cy="671.7" r="4.2" fill="none" stroke="#008088" stroke-width="1"/><circle cx="624.4" cy="671.7" r="2.4" fill="none" stroke="#e01010" stroke-width="1.2"/>
<line x1="319.9" y1="802.7" x2="277.9" y2="838.3" stroke="#008088" stroke-width="1" /><line x1="316.1" y1="798.1" x2="274.1" y2="833.7" stroke="#008088" stroke-width="1" /><path d="M277.5 826.9L273.7 837.9L285.2 836.1" fill="none" stroke="#008088" stroke-width="1"/>
<circle cx="318" cy="800.4" r="4.2" fill="none" stroke="#008088" stroke-width="1"/><circle cx="318" cy="800.4" r="2.4" fill="none" stroke="#e01010" stroke-width="1.2"/>
<line x1="626.3" y1="798.1" x2="668.9" y2="833.7" stroke="#008088" stroke-width="1" /><line x1="622.5" y1="802.7" x2="665.1" y2="838.3" stroke="#008088" stroke-width="1" /><path d="M657.8 836.1L669.3 837.9L665.5 826.9" fill="none" stroke="#008088" stroke-width="1"/>
<circle cx="624.4" cy="800.4" r="4.2" fill="none" stroke="#008088" stroke-width="1"/><circle cx="624.4" cy="800.4" r="2.4" fill="none" stroke="#e01010" stroke-width="1.2"/>
<circle cx="465.400" cy="737.900" r="4" fill="none" stroke="#000"/><path d="M461.400 737.900h8M465.400 733.900v8M462.600 735.100l5.600 5.600M468.200 735.100l-5.600 5.600" stroke="#000" stroke-width="0.8"/>
<line x1="301.7" y1="750.6" x2="301.7" y2="881.6" stroke="#ff0000" stroke-width="1" stroke-dasharray="3 3"  shape-rendering="crispEdges"/>
<line x1="306.6" y1="750.6" x2="306.6" y2="881.6" stroke="#ff0000" stroke-width="1" stroke-dasharray="3 3"  shape-rendering="crispEdges"/>
<rect x="299.500" y="866" width="8" height="15.500" fill="none" stroke="#ff0000" stroke-dasharray="3 2"/>
<line x1="362.7" y1="845" x2="362.7" y2="878" stroke="#ff0000" stroke-width="1" stroke-dasharray="3 3"  shape-rendering="crispEdges"/>
<line x1="373.2" y1="845" x2="373.2" y2="878" stroke="#ff0000" stroke-width="1" stroke-dasharray="3 3"  shape-rendering="crispEdges"/>
<line x1="362.7" y1="879" x2="362.7" y2="935" stroke="#ff0000" stroke-width="1.2"  shape-rendering="crispEdges"/>
<line x1="373.2" y1="879" x2="373.2" y2="935" stroke="#ff0000" stroke-width="1.2"  shape-rendering="crispEdges"/>
<rect x="362" y="841.200" width="8.800" height="3.800" fill="#ff0000"/>
<rect x="361.200" y="898" width="13.500" height="15.200" fill="none" stroke="#ff0000" stroke-width="1.2"/>
<line x1="746.6" y1="800.2" x2="746.6" y2="881" stroke="#ff0000" stroke-width="1.2" stroke-dasharray="3 2"  shape-rendering="crispEdges"/>
<line x1="759.7" y1="800.2" x2="759.7" y2="881" stroke="#ff0000" stroke-width="1" stroke-dasharray="4 3"  shape-rendering="crispEdges"/>
<line x1="746.6" y1="800.2" x2="759.7" y2="800.2" stroke="#ff0000" stroke-width="1" stroke-dasharray="4 3"  shape-rendering="crispEdges"/>
<line x1="746.6" y1="881" x2="746.6" y2="935" stroke="#ff0000" stroke-width="1.2"  shape-rendering="crispEdges"/>
<line x1="759.7" y1="881" x2="759.7" y2="935" stroke="#ff0000" stroke-width="1.2"  shape-rendering="crispEdges"/>
</g>
<rect x="903.5" y="467" width="428.5" height="154" fill="#fdfdf8"/>
<path d="M915.500 467V621M915.500 469.500H1332M915.500 527.500H1332M915.500 558.500H1332M915.500 579.500H1332" fill="none" stroke="#000" stroke-width="1"/>
<text x="922.3" y="485.8" font-size="14.7" fill="#000" font-family="Liberation Sans, sans-serif" textLength="88.7" lengthAdjust="spacingAndGlyphs">PIIR. NUMERO</text>
<text x="1111.4" y="485.8" font-size="14.7" fill="#000" font-family="Liberation Sans, sans-serif" textLength="26.3" lengthAdjust="spacingAndGlyphs">LKM</text>
<text x="1173.6" y="485.8" font-size="14.7" fill="#000" font-family="Liberation Sans, sans-serif" textLength="74.6" lengthAdjust="spacingAndGlyphs">MATERIAALI</text>
<text x="922.9" y="508.9" font-size="20.3" fill="#00f000" font-family="Liberation Sans, sans-serif" textLength="62.6" lengthAdjust="spacingAndGlyphs">CL-A/6</text>
<text x="1130.1" y="508.9" font-size="20.3" fill="#00f000" font-family="Liberation Sans, sans-serif" textLength="9.7" lengthAdjust="spacingAndGlyphs">1</text>
<text x="1172.2" y="523.4" font-size="14.7" fill="#ff0000" font-family="Liberation Sans, sans-serif" textLength="145.1" lengthAdjust="spacingAndGlyphs">Concrete_Undefined</text>
<text x="926.6" y="575" font-size="14.7" fill="#000" font-family="Liberation Sans, sans-serif" textLength="46.6" lengthAdjust="spacingAndGlyphs">MÄÄRÄ</text>
<text x="1014.7" y="575" font-size="14.7" fill="#000" font-family="Liberation Sans, sans-serif" textLength="79.4" lengthAdjust="spacingAndGlyphs">TARVIKKEET</text>
<text x="960" y="597.8" font-size="14.7" fill="#ff0000" font-family="Liberation Sans, sans-serif" textLength="7" lengthAdjust="spacingAndGlyphs">1</text>
<text x="980.3" y="597.8" font-size="14.7" fill="#000" font-family="Liberation Sans, sans-serif" textLength="18.3" lengthAdjust="spacingAndGlyphs">kpl</text>
<text x="960" y="616.1" font-size="14.7" fill="#ff0000" font-family="Liberation Sans, sans-serif" textLength="7" lengthAdjust="spacingAndGlyphs">1</text>
<text x="980.3" y="616.1" font-size="14.7" fill="#000" font-family="Liberation Sans, sans-serif" textLength="18.3" lengthAdjust="spacingAndGlyphs">kpl</text>
<text x="1015.4" y="616.1" font-size="14.7" fill="#ff0000" font-family="Liberation Sans, sans-serif" textLength="190.6" lengthAdjust="spacingAndGlyphs">NOSTOANKKURI PLA36 P</text>
<text x="765.3" y="258" font-size="14.6" fill="#000" font-family="Liberation Sans, DejaVu Sans, sans-serif" textLength="223" lengthAdjust="spacingAndGlyphs">Префикс:EB_PLA36P класс:100</text>
<text x="771.6" y="285.8" font-size="14.6" fill="#000" font-family="Liberation Sans, DejaVu Sans, sans-serif" textLength="224.3" lengthAdjust="spacingAndGlyphs">Префикс:EB_PLA36P класс:100</text>
<text x="1005.3" y="284.9" font-size="14.3" fill="#000" font-family="Liberation Sans, DejaVu Sans, sans-serif" textLength="144.2" lengthAdjust="spacingAndGlyphs">Имя:NOSTOANKKURI</text>
<text x="1005.3" y="306.9" font-size="14.3" fill="#000" font-family="Liberation Sans, DejaVu Sans, sans-serif" textLength="55" lengthAdjust="spacingAndGlyphs">PLA36 P</text>
<text x="852.3" y="400.3" font-size="13.8" fill="#000" font-family="Liberation Sans, DejaVu Sans, sans-serif" textLength="185.7" lengthAdjust="spacingAndGlyphs">класс 421, имя LISÄTERÄS</text>
<text x="870.5" y="763.5" font-size="13.8" fill="#000" font-family="Liberation Sans, DejaVu Sans, sans-serif" textLength="84" lengthAdjust="spacingAndGlyphs">на чертеже</text>
<text x="870.5" y="785.7" font-size="13.8" fill="#000" font-family="Liberation Sans, DejaVu Sans, sans-serif" textLength="136" lengthAdjust="spacingAndGlyphs">отображны только</text>
<text x="870.5" y="807.8" font-size="13.8" fill="#000" font-family="Liberation Sans, DejaVu Sans, sans-serif" textLength="79.5" lengthAdjust="spacingAndGlyphs">анкера без</text>
<text x="870.5" y="830" font-size="13.8" fill="#000" font-family="Liberation Sans, DejaVu Sans, sans-serif" textLength="127" lengthAdjust="spacingAndGlyphs">доп.армирования</text>
<path d="M391.9 298.3C392.6 296.2 392.7 293.8 394 292C396 289.4 399.1 287 402 285C405.3 282.7 408.9 281 412.4 279C414.9 277.5 417.3 275.7 420 274.5C422.9 273.2 426 271.8 429.2 271.4C434 270.8 443.1 271 450 271C460.4 271 579.6 271.2 589.8 271.4C596.6 271.5 603.3 272.4 610 273.5C615.6 274.4 621.1 275.8 626.5 277.5C634.6 280.1 642.8 283.6 651 286.7C659.1 289.8 668.6 292.5 675.4 295.9C680 298.2 683.9 301.6 687.7 305C690.9 307.9 693.4 311.6 696.2 314.9" fill="none" stroke="#000" stroke-width="3" stroke-linecap="round" stroke-linejoin="round"/>
<path d="M492.5 300.5C493.7 302.5 494.5 304.7 496 306.5C497.4 308.2 499.5 309.4 501 311C502.8 312.9 504.1 315.3 506 317C508.2 318.9 510.6 320.7 513.3 321.9C516 323.1 519 323.6 522 324C526.2 324.6 530.5 324.9 534.7 325C541.1 325.2 575.5 325.9 595.9 326.5C611.2 326.9 626.5 327.1 641.8 328C653 328.6 669.1 330.2 675.4 331C679.6 331.5 683.7 332.5 687.7 334C690.7 335.1 693.4 337.1 696.2 338.7" fill="none" stroke="#000" stroke-width="3" stroke-linecap="round" stroke-linejoin="round"/>
<path d="M451.2 364.1C452.8 365.6 454.3 367.2 456 368.5C457.7 369.8 459.3 371.3 461.3 371.8C464.3 372.6 468.4 372.4 472 372.5C476.6 372.6 481.2 372.6 485.8 372.4C492.7 372.1 514.4 371 528.6 369.9C540.9 368.9 553.1 367.4 565.3 366.2C575.5 365.2 585.7 364.1 595.9 363.2C609.2 362.1 623.6 360.7 635.7 360.1C643.8 359.7 651.9 360 660 360C672.1 360 684.1 360.1 696.2 360.1" fill="none" stroke="#000" stroke-width="3" stroke-linecap="round" stroke-linejoin="round"/>
<path d="M407.8 397.4C410.5 398.9 413.1 400.8 416 402C419.8 403.6 423.7 405.1 427.7 406C433.7 407.3 441.8 408.7 449 409C459.7 409.4 496.3 409.4 520 409.5C547.3 409.6 595.6 409.9 602 409.7C606.3 409.5 610.4 407.8 614.3 406C617.5 404.5 620.1 402 623 400C626.2 397.9 629.3 395.7 632.6 393.8C635.6 392 638.7 390.3 642 389C645.4 387.7 648.9 386.6 652.5 386.1C657.9 385.4 664.2 385.6 670 385.5C678.7 385.4 687.5 385.5 696.2 385.5" fill="none" stroke="#000" stroke-width="3" stroke-linecap="round" stroke-linejoin="round"/>
<path d="M305.9 373.3C306.1 375.2 305.9 377.2 306.5 379C307.2 381.1 308.6 382.8 309.9 384.6C311.8 387.3 314.4 391.1 317 394C320 397.3 323.4 400.1 326.7 403C330.4 406.1 334 409.3 338 412C342.2 414.9 346.4 418 351.2 419.8C357.2 422.1 363.7 422.8 370 424C376.9 425.3 384 426 390.9 427.4C396.7 428.5 402.3 430.2 408 431.5C413.5 432.8 418.9 434.8 424.6 435.1C433.1 435.5 474.9 435.7 500 435.8C534 436 589.5 436.5 602 436C610.4 435.6 618.4 432.7 626.5 430.5C636.8 427.8 650.2 423.9 657.1 421.3C661.7 419.5 665.6 416.3 670 414C673.8 412 678.4 409.6 681.5 408.5C683.6 407.8 685.8 407.6 688 407.5C690.7 407.3 693.5 407.5 696.2 407.5" fill="none" stroke="#000" stroke-width="3" stroke-linecap="round" stroke-linejoin="round"/>
<path d="M325.2 415.2C325 417.8 324.3 420.4 324.5 423C324.7 425.6 325.4 428.1 326.1 430.5C327.2 434.1 328.4 437.6 330 441C331.7 444.8 333.5 448.5 335.9 451.9C338.2 455.2 341 458.3 344 461C347.1 463.9 350.8 466.1 354.2 468.7C356.5 470.4 358.5 472.5 361 474C363.7 475.6 366.4 477.3 369.5 477.9C373.9 478.8 378.5 478.3 383 478.5C387.7 478.8 392.5 478.5 397.1 479.4C401.9 480.3 406.3 482.5 411 484C415.5 485.4 419.9 487.7 424.6 488C431.7 488.4 461.5 488.2 480 488.2C498.2 488.2 519.4 488.5 534.7 488C544.9 487.7 555.2 487.3 565.3 485.5C573.7 484 581.7 480.7 589.8 477.9C598.1 475.1 606.1 471.8 614.3 468.7C626.5 464.1 638.6 459 651 455C661 451.8 676.5 449.1 681.5 447.3C684.8 446.1 687.3 443.3 690 441C692.2 439.2 694.1 437.1 696.2 435.1" fill="none" stroke="#000" stroke-width="3" stroke-linecap="round" stroke-linejoin="round"/>
<path d="M823.3 311.3C824.9 312.2 826.8 312.7 828 314C829.6 315.7 830.8 317.8 831.5 320C832.4 322.6 832.5 325.3 832.7 328C832.9 332 832.9 339.3 833 345C833 350 832.8 356.4 833 360C833.2 362.4 833.5 364.8 834.5 367C835.2 368.6 836.6 370 838 371C839.1 371.8 841.9 371.1 842 372.5C842.2 374.1 839.1 374.5 838.5 376C837.6 378.2 837.5 380.6 837.5 383C837.4 386.5 837.9 394.3 838 400C838.1 406.7 837.8 413.3 838 420C838.3 426.7 839.2 434 839.5 440C839.7 444 840.1 449 839.5 452C839.1 454 837.7 455.9 836 457C833.7 458.5 830.8 459.2 828 459.5C823.8 460 817.6 459.8 814 459.5C811.6 459.3 809.2 458.6 807 457.5C805.1 456.5 803.7 454.8 802 453.5" fill="none" stroke="#000" stroke-width="3" stroke-linecap="round" stroke-linejoin="round"/>
<path d="M698.5 267.9C692.2 267.9 684.6 268.4 679.6 267.9C676.3 267.6 673.1 266.4 670 265C666.9 263.6 663.8 261.9 661.3 259.7C657.5 256.3 647.4 246.4 640.9 239.3C632.5 230.1 624.3 220.6 616.5 210.8C608 200.2 601 188.4 592 178.2C581.9 166.6 571.3 155.3 559.4 145.6C549.5 137.5 538.1 131.2 526.8 125.2C513.6 118.2 499.9 112.3 486 106.9C472.7 101.7 459 97.3 445.3 93.4C431.9 89.6 418.3 86.1 404.5 83.6C391 81.1 377.4 79.3 363.8 78.3C350.2 77.3 336.6 77.6 323 77.5C306.7 77.4 286.7 76.3 274.1 77.5C265.7 78.3 257.3 80.7 249.7 84.5C244.1 87.3 239 91.5 235.4 96.7C232.2 101.4 231.6 107.5 230.1 113C228.2 119.7 227 126.6 225.2 133.4C223.4 140.2 221.4 147 219.1 153.7C216.7 160.6 213.3 167.2 210.9 174.1C209.3 178.8 208.2 183.6 206.9 188.4" fill="none" stroke="#22b14c" stroke-width="3" stroke-linecap="round" stroke-linejoin="round"/>
<path d="M202 161.9L203 176L204.5 188.4L207 188.8" fill="none" stroke="#22b14c" stroke-width="2.6" stroke-linecap="round" stroke-linejoin="round"/>
<path d="M234.6 170C232.4 171 229.9 171.5 228 173C225.3 175 223.6 178 221.1 180.2C218.6 182.4 215.8 184.2 213 186C211.1 187.2 208.9 188.1 206.9 189.2" fill="none" stroke="#22b14c" stroke-width="2.6" stroke-linecap="round" stroke-linejoin="round"/>
<path d="M698.5 291.1C658.9 291.1 585.3 291.2 579.8 291.1C576.2 291.1 572.5 290.3 569 289.5C565.7 288.7 562.5 287.7 559.4 286.2C555.1 284.1 551 281.7 547 279C542.8 276.2 538.6 273.4 535 269.9C529.6 264.6 518.7 252.2 510.5 243.4C502.3 234.6 493.7 224.6 486 216.9C480.9 211.8 475.1 206.1 469.7 202.6C466.1 200.3 461.7 199.5 457.5 198.6C454.1 197.9 450.5 197.8 447 197.8C443.7 197.8 440.3 198 437.1 198.6C434 199.2 430.9 200.1 428 201.5C425.3 202.8 423.1 204.8 420.8 206.7C417.4 209.6 413.8 212.5 411 216C408.3 219.3 406.3 223.2 404.5 227.1C401.8 232.9 396.6 243.1 394.3 251.6C391.1 263.6 389.6 275.9 388.2 288.2C386.9 300.4 386.7 312.7 386.2 324.9C385.7 337.1 385.6 349.4 385.4 361.6C385.3 370.8 385.4 380.1 385.4 389.3" fill="none" stroke="#22b14c" stroke-width="3" stroke-linecap="round" stroke-linejoin="round"/>
<path d="M375.2 373.8L385.4 390.1L393.1 379.9" fill="none" stroke="#22b14c" stroke-width="3" stroke-linecap="round" stroke-linejoin="round"/>
<path d="M302.7 751.7C304.2 750.3 305.4 748.5 307.1 747.4C309.7 745.8 314 745.1 316.9 743C319.2 741.4 320.5 738.6 322.4 736.5C323.8 735 325.1 733.4 326.7 732.1C329.1 730.1 332 727.7 335 726C338.3 724.1 342 722.9 345.5 721.5C350.3 719.6 355.1 717.6 360 716C366 714 372 712 378.2 710.6C384.7 709.1 391.4 708.4 398 707.5C405.2 706.5 412.4 705.5 419.6 705.1C430.4 704.5 446.5 704 460 703.8C480 703.5 500 703.6 520 703.6C550 703.6 640 703.6 700 703.6C766.7 703.6 879.1 703.6 900 703.6C913.9 703.6 931.1 704.1 941.7 703.5C948.8 703.1 955.6 701.1 962.6 700C967.3 699.3 972.2 699.8 976.6 698.2C980.6 696.8 983.2 692.8 987.1 691.2C991.5 689.4 996.6 689.8 1001.1 688.4C1005.9 686.9 1010.2 683.9 1015 682.5C1020.7 680.8 1026.9 681.1 1032.5 679C1036.4 677.5 1040.4 675.3 1042.9 672C1045.5 668.6 1046.5 664.1 1047.1 659.8C1047.9 654.1 1047.1 648.2 1047.1 642.4" fill="none" stroke="#000" stroke-width="3" stroke-linecap="round" stroke-linejoin="round"/>
<path d="M1037.7 647.6L1047.1 641.5L1058.7 653.5" fill="none" stroke="#000" stroke-width="3" stroke-linecap="round" stroke-linejoin="round"/>
<path d="M1268.1 609.2C1258.7 608.9 1249.4 608.6 1240 608.3C1231.3 608 1222.6 608.1 1214 607.5C1208 607 1202 605.7 1196 605C1190.4 604.3 1184.8 603.4 1179.1 603.3C1170.6 603.1 1139.7 603.1 1120 603C1104.8 602.9 1089.6 602.8 1074.4 602.9C1051.6 603 1024.8 603.2 1000 603.4C983.5 603.5 954.7 603.4 950.4 604C947.5 604.4 946.2 608.2 945.2 610.9C943.8 614.8 942.6 619.2 943.5 623.2C944.4 627.3 946.8 631.6 950.4 633.6C955.8 636.6 963.1 637.5 969.6 637.8C979.4 638.3 1020.8 638 1046.4 638.2C1067.4 638.4 1091.8 638.1 1109.3 638.9C1121 639.4 1132.5 641.5 1144.2 642.4C1155.8 643.3 1167.5 643.8 1179.1 644.1C1192.7 644.4 1206.4 644.2 1220 644.2C1235.5 644.2 1258.3 645.3 1266.4 644.1C1271.8 643.3 1276.3 639.2 1280.3 635.4C1283.3 632.6 1285.9 628.9 1286.6 624.9C1287.1 621.9 1285.5 618.7 1283.8 616.2C1282.1 613.6 1279.1 612.2 1276.8 610.2" fill="none" stroke="#000" stroke-width="3" stroke-linecap="round" stroke-linejoin="round"/>
<path d="M324.6 732C329.3 731.8 334.1 731.4 338.6 732.7C343.7 734.2 348.3 737 352.6 740.1C357.7 743.8 362.3 748.3 366.6 753C369.8 756.5 373.1 760.2 374.8 764.6C376.5 769 376.1 773.9 376.4 778.6C376.7 783.1 376.5 787.5 376.5 792C376.5 796.9 376.8 801.8 376.4 806.6C375.9 812.9 375 819.2 373.6 825.3C372.5 830.1 370.9 834.8 369 839.3C367 844.1 364.3 848.6 362 853.3C359.7 858 357.6 862.8 355 867.3C351.4 873.7 347.7 880.1 343.3 885.9C340.3 889.8 336.4 893.7 332.8 896.4C330.4 898.2 327.5 899.5 324.6 899.9C320.2 900.5 311.2 901.7 304.8 899.9C300.1 898.6 296.9 894.1 293 891C289.1 887.9 284.9 885 281.5 881.3C277.8 877.3 273.8 870.6 272 868C270.8 866.3 268.8 864.7 268.7 862.6C268.5 859.4 268.5 834.2 268.6 820C268.7 806.2 268.5 785.9 269.1 778.6C269.5 773.7 271.2 769 273.3 764.6C276.5 758 280.3 751.4 285 746C288.1 742.4 292.4 740 296.6 737.8C300.3 735.9 304.3 734.6 308.3 733.8C313.7 732.7 319.1 732.2 324.6 732Z" fill="none" stroke="#000" stroke-width="3" stroke-linecap="round" stroke-linejoin="round"/>
<path d="M376.3 806.3C390.9 806.5 405.4 806.8 420 807C430.4 807.2 450 807.4 451.1 807.4C451.8 807.4 451.5 805.7 452.2 805.6C453.2 805.5 461.7 805.1 466.4 805.6C470.8 806.1 475.1 807.8 479.5 808.5C486.1 809.6 499.9 811.1 510 812.8C521 814.7 534 817.5 542.7 819.4C548.5 820.7 554.3 822 560 823.7C567.4 826 574.3 829.5 581.8 831.4C592.6 834.2 603.6 835.9 614.5 837.9C625.4 839.9 636.3 842 647.3 843.4C661.8 845.2 676.3 846.6 690.9 847.3C707.2 848.1 723.6 847.6 740 847.7C757.8 847.8 785.7 848.1 793.5 847.7C798.7 847.5 803.9 846.3 808.7 844.5C812.7 843 816.2 840.4 819.7 837.9C823.4 835.3 826.8 832.3 830 829.1C833.8 825.3 837.5 821.4 840.5 816.9C843.4 812.6 844.9 807.4 847.5 802.9C849.5 799.5 851.1 795.4 854.4 793.2C856.9 791.6 860.3 792.7 863.2 792.5" fill="none" stroke="#000" stroke-width="3" stroke-linecap="round" stroke-linejoin="round"/>
<path d="M891.1 715.7C895.4 711.9 901.2 709.8 906.8 708.7C915.2 707 925.4 706.6 934.7 706.9C941.8 707.1 948.8 708.6 955.7 710.4C966 713.1 976.7 717.3 987.1 720.9C995.3 723.7 1003.5 726.4 1011.5 729.6C1019.8 732.8 1027.9 736.4 1036 740.1C1041.9 742.8 1048.3 744.8 1053.4 748.8C1058.9 753.1 1063.7 758.5 1067.4 764.5C1071.4 770.9 1074 778.2 1076.1 785.5C1078.1 792.3 1078.9 799.4 1079.6 806.4C1080.2 812.6 1080 818.8 1079.8 825C1079.6 831.6 1080.3 839.6 1078.6 844.8C1077.5 848.3 1074.4 851.4 1070.9 852.5C1065.7 854.1 1050.1 856.5 1039.5 857.1C1023.7 858 992.9 858.6 969.6 858.1C952.1 857.7 934.7 856.2 917.3 854.6C905.6 853.5 890.8 852.7 882.4 850.1C876.8 848.4 872.3 843.9 868.4 839.6C865.3 836.2 862.6 831.9 862.1 827.4C861.3 820.6 863.2 806.5 863.2 796C863.2 787.8 861.2 779.6 862.1 771.5C862.9 764.3 865.5 757.3 868.4 750.6C871.1 744.4 875.2 738.8 878.9 733.1C882.8 727.2 885.8 720.4 891.1 715.7Z" fill="none" stroke="#000" stroke-width="3" stroke-linecap="round" stroke-linejoin="round"/>
</svg></body></html>
